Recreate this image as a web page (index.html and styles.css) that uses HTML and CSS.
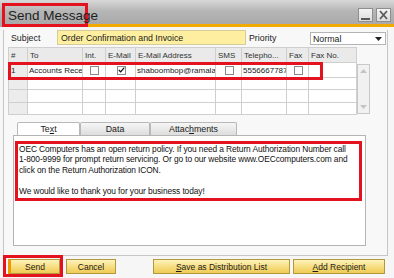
FILE: index.html
```html
<!DOCTYPE html>
<html lang="en">
<head>
    <meta charset="UTF-8">
    <meta name="viewport" content="width=device-width, initial-scale=1.0">
    <title>Send Message</title>
    <link rel="stylesheet" href="styles.css">
</head>
<body>
    <div class="window">
        <div class="titlebar">
            <div class="title-mark"><span class="title">Send Message</span></div>
            <div class="title-rest">
                <span class="tb-btn">
                    <svg width="13" height="12" viewBox="0 0 13 12"><rect x="2" y="9" width="9" height="2" fill="#5a5a5a"/></svg>
                </span>
                <span class="tb-btn">
                    <svg width="13" height="12" viewBox="0 0 13 12"><path d="M3 2 L10 10 M10 2 L3 10" stroke="#5a5a5a" stroke-width="1.8"/></svg>
                </span>
            </div>
        </div>

        <div class="panel">
            <div class="subject-row">
                <span class="lbl subj-lbl">Subject</span>
                <div class="subject-field">Order Confirmation and Invoice</div>
                <span class="lbl prio-lbl">Priority</span>
                <div class="select">
                    <span>Normal</span>
                    <svg width="7" height="4" viewBox="0 0 7 4"><path d="M0 0 H7 L3.5 4 Z" fill="#222"/></svg>
                </div>
            </div>

            <div class="grid-wrap">
                <table class="grid">
                    <colgroup>
                        <col style="width:19px"><col style="width:55px"><col style="width:23px">
                        <col style="width:30px"><col style="width:80px"><col style="width:26px">
                        <col style="width:45px"><col style="width:22px"><col style="width:48px">
                    </colgroup>
                    <tr class="head">
                        <th>#</th><th>To</th><th>Int.</th><th>E-Mail</th><th>E-Mail Address</th>
                        <th>SMS</th><th>Telepho...</th><th>Fax</th><th>Fax No.</th>
                    </tr>
                    <tr class="row first">
                        <td class="num">1</td>
                        <td>Accounts Rece</td>
                        <td class="cb"><span class="box"></span></td>
                        <td class="cb"><span class="box">
                            <svg width="9" height="8" viewBox="0 0 9 8"><path d="M1 4 L3.5 6.5 L8 1" stroke="#111" stroke-width="1.6" fill="none"/></svg>
                        </span></td>
                        <td>shaboombop@ramala</td>
                        <td class="cb"><span class="box"></span></td>
                        <td>5556667787</td>
                        <td class="cb"><span class="box"></span></td>
                        <td></td>
                    </tr>
                    <tr class="row r2"><td class="num"></td><td></td><td></td><td></td><td></td><td></td><td></td><td></td><td></td></tr>
                    <tr class="row r3"><td class="num"></td><td></td><td></td><td></td><td></td><td></td><td></td><td></td><td></td></tr>
                    <tr class="row r4"><td class="num"></td><td></td><td></td><td></td><td></td><td></td><td></td><td></td><td></td></tr>
                </table>
                <div class="scrollbar">
                    <svg width="7" height="4" viewBox="0 0 7 4"><path d="M0 4 H7 L3.5 0 Z" fill="#c4c4c4"/></svg>
                    <svg width="7" height="4" viewBox="0 0 7 4"><path d="M0 0 H7 L3.5 4 Z" fill="#c4c4c4"/></svg>
                </div>
                <div class="row-mark"></div>
            </div>

            <div class="tabs">
                <div class="tab active">Te<u>x</u>t</div>
                <div class="tab">Data</div>
                <div class="tab">Attac<u>h</u>ments</div>
            </div>
            <div class="tab-panel">
                <div class="msg">
                    OEC Computers has an open return policy. If you need a Return Authorization Number call<br>
                    1-800-9999 for prompt return servicing. Or go to our website www.OECcomputers.com and<br>
                    click on the Return Authorization ICON.<br><br>
                    We would like to thank you for your business today!
                </div>
            </div>
        </div>

        <div class="buttons">
            <div class="send-mark"><span class="btn send">Send</span></div>
            <span class="btn cancel">Cancel</span>
            <span class="btn save"><u>S</u>ave as Distribution List</span>
            <span class="btn add"><u>A</u>dd Recipient</span>
        </div>
    </div>
</body>
</html>
```

FILE: styles.css
```css
* {
  margin: 0;
  padding: 0;
  box-sizing: border-box;
}

body {
  background: #f4f4f4;
  font-family: 'Liberation Sans', Arial, sans-serif;
  font-size: 8.8px;
  color: #1a1a1a;
}

.window {
  width: 394px;
  height: 278px;
  background: #f6f6f6;
}

/* title bar */
.titlebar {
  display: flex;
  align-items: flex-end;
  height: 27px;
  background: linear-gradient(to bottom, #d8d8d8, #b6b6b6 40%, #a6a6a6);
}

.title-mark {
  width: 86px;
  height: 24px;
  margin-left: 2px;
  border: 3px solid #e4121f;
  padding-left: 3px;
  display: flex;
  align-items: center;
}

.title {
  font-size: 13.5px;
  color: #1e1e1e;
  white-space: nowrap;
}

.title-rest {
  flex: 1;
  height: 27px;
  border-bottom: 3px solid #f2a900;
  display: flex;
  justify-content: flex-end;
  align-items: flex-start;
  gap: 3px;
  padding: 8px 3px 0 0;
}

.tb-btn {
  width: 15px;
  height: 14px;
  border: 1px solid #8e8e8e;
  background: linear-gradient(to bottom, #f4f4f4, #dcdcdc);
  display: flex;
  align-items: center;
  justify-content: center;
}

/* main panel */
.panel {
  height: 226px;
  margin: 0 6px 0 3px;
  border: 1px solid #c6c6c6;
  border-top: none;
  background: #f8f8f8;
}

.subject-row {
  display: flex;
  align-items: center;
  height: 15px;
  margin-top: 3px;
}

.lbl {
  white-space: nowrap;
}

.subj-lbl {
  width: 46px;
  margin-left: 7px;
}

.subject-field {
  width: 189px;
  height: 15px;
  background: #fdef9f;
  border: 1px solid #d6cc9a;
  padding: 1px 3px;
  line-height: 12px;
}

.prio-lbl {
  width: 61px;
  margin-left: 3px;
}

.select {
  width: 76px;
  height: 13px;
  margin-top: 2px;
  background: #fff;
  border: 1px solid #b4b4b4;
  display: flex;
  justify-content: space-between;
  align-items: center;
  padding: 0 3px 0 2px;
}

/* grid */
.grid-wrap {
  position: relative;
  display: flex;
  margin: 2px 0 0 4px;
}

.grid {
  width: 348px;
  table-layout: fixed;
  border-collapse: collapse;
  font-size: 8px;
}

.grid th,
.grid td {
  border: 1px solid #cfcfcf;
  padding: 0 0 0 1px;
  text-align: left;
  font-weight: normal;
  white-space: nowrap;
  overflow: hidden;
}

.grid .head th {
  height: 15px;
  background: #eaeaea;
  color: #333;
  padding-left: 2px;
}

.grid .row td {
  background: #fff;
}

.grid .row td.num {
  background: #ececec;
  padding-left: 2px;
}

.grid .first td {
  height: 15px;
}

.grid .r2 td { height: 12px; }
.grid .r3 td { height: 13px; }
.grid .r4 td { height: 12px; }

.grid td.cb {
  text-align: center;
}

.box {
  display: inline-flex;
  align-items: center;
  justify-content: center;
  width: 9px;
  height: 9px;
  border: 1px solid #8a8a8a;
  background: #fff;
  vertical-align: middle;
}

.scrollbar {
  width: 13px;
  height: 50px;
  margin-top: 17px;
  border: 1px solid #c8c8c8;
  background: #f1f1f1;
  display: flex;
  flex-direction: column;
  justify-content: space-between;
  align-items: center;
  padding: 4px 0;
}

.row-mark {
  position: absolute;
  left: 0;
  top: 15px;
  width: 315px;
  height: 18px;
  border: 3px solid #e4121f;
}

/* tabs */
.tabs {
  display: flex;
  margin: 7px 0 0 13px;
}

.tab {
  height: 13px;
  border: 1px solid #b8b8b8;
  border-bottom: none;
  border-radius: 2px 2px 0 0;
  background: linear-gradient(to bottom, #f6f6f6, #dddddd);
  text-align: center;
  line-height: 12px;
  width: 70px;
}

.tab:first-child {
  width: 63px;
}

.tab:last-child {
  width: 87px;
}

.tab.active {
  background: #fff;
}

.tab-panel {
  width: 353px;
  height: 111px;
  margin-left: 9px;
  background: #fff;
  border: 1px solid #b4b4b4;
  padding: 5px 0 0 1px;
}

.msg {
  width: 347px;
  height: 60px;
  border: 3px solid #e4121f;
  font-size: 8.4px;
  letter-spacing: -0.1px;
  line-height: 10.4px;
  padding-left: 1px;
  white-space: nowrap;
  overflow: hidden;
  color: #111;
}

/* bottom buttons */
.buttons {
  display: flex;
  align-items: flex-start;
  margin-top: -1px;
  padding-left: 3px;
}

.send-mark {
  border: 3px solid #e4121f;
  padding: 1px 0 0 2px;
  height: 22px;
}

.btn {
  display: flex;
  align-items: center;
  justify-content: center;
  height: 15px;
  border: 1px solid #b4983e;
  background: linear-gradient(to bottom, #fdf3bd, #f6dc7c 55%, #efcb55);
  color: #1a1a1a;
  font-size: 8.5px;
  white-space: nowrap;
}

.send {
  width: 52px;
  border-left: 3px solid #f09a00;
}

.cancel {
  width: 50px;
  margin: 4px 0 0 3px;
}

.save {
  width: 137px;
  margin: 4px 0 0 37px;
}

.add {
  width: 92px;
  margin: 4px 0 0 3px;
}
```
